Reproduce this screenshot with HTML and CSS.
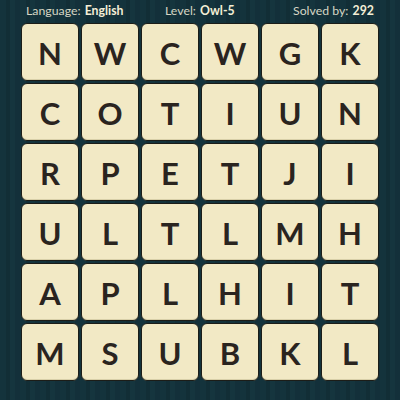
FILE: index.html
```html
<!DOCTYPE html>
<html>
<head>
<meta charset="utf-8">
<link rel="stylesheet" href="styles.css">
</head>
<body>
<div class="page">
  <div class="header">
    <span class="item lang">Language: <b>English</b></span>
    <span class="item level">Level: <b>Owl-5</b></span>
    <span class="item solved">Solved by: <b>292</b></span>
  </div>
  <div class="grid">
    <div class="tile">N</div><div class="tile">W</div><div class="tile">C</div><div class="tile">W</div><div class="tile">G</div><div class="tile">K</div>
    <div class="tile">C</div><div class="tile">O</div><div class="tile">T</div><div class="tile">I</div><div class="tile">U</div><div class="tile">N</div>
    <div class="tile">R</div><div class="tile">P</div><div class="tile">E</div><div class="tile">T</div><div class="tile">J</div><div class="tile">I</div>
    <div class="tile">U</div><div class="tile">L</div><div class="tile">T</div><div class="tile">L</div><div class="tile">M</div><div class="tile">H</div>
    <div class="tile">A</div><div class="tile">P</div><div class="tile">L</div><div class="tile">H</div><div class="tile">I</div><div class="tile">T</div>
    <div class="tile">M</div><div class="tile">S</div><div class="tile">U</div><div class="tile">B</div><div class="tile">K</div><div class="tile">L</div>
  </div>
</div>
</body>
</html>
```
FILE: styles.css
```css
html, body {
  margin: 0;
  padding: 0;
}
body {
  width: 400px;
  height: 400px;
  overflow: hidden;
  background-color: #13313a;
  background-image: repeating-linear-gradient(90deg,
    #14333c 0px, #14333c 6px,
    #122e36 6px, #122e36 10px,
    #15353e 10px, #15353e 15px,
    #13303a 15px, #13303a 20px);
  font-family: "Lato", "Open Sans", sans-serif;
}
.page {
  width: 400px;
  height: 400px;
}
.header {
  height: 23px;
  position: relative;
  color: #d6d6c4;
  font-size: 12.3px;
  line-height: 23px;
}
.header b {
  color: #f3eed6;
  font-weight: 700;
  margin-left: 1px;
}
.item {
  position: absolute;
  top: -1px;
  white-space: nowrap;
}
.lang { left: 26px; }
.level { left: 165px; }
.solved { left: 293px; }
.grid {
  margin-left: 21px;
  display: grid;
  grid-template-columns: repeat(6, 58px);
  grid-auto-rows: 58px;
  gap: 2px;
}
.tile {
  box-sizing: border-box;
  background: #f2e9c5;
  border: 1px solid #1c1d18;
  border-radius: 6px;
  box-shadow: inset 0 -1px 0 #d8cfa8;
  display: flex;
  align-items: center;
  justify-content: center;
  color: #2a241f;
  font-size: 31px;
  font-weight: 700;
  padding-top: 1px;
}
```
